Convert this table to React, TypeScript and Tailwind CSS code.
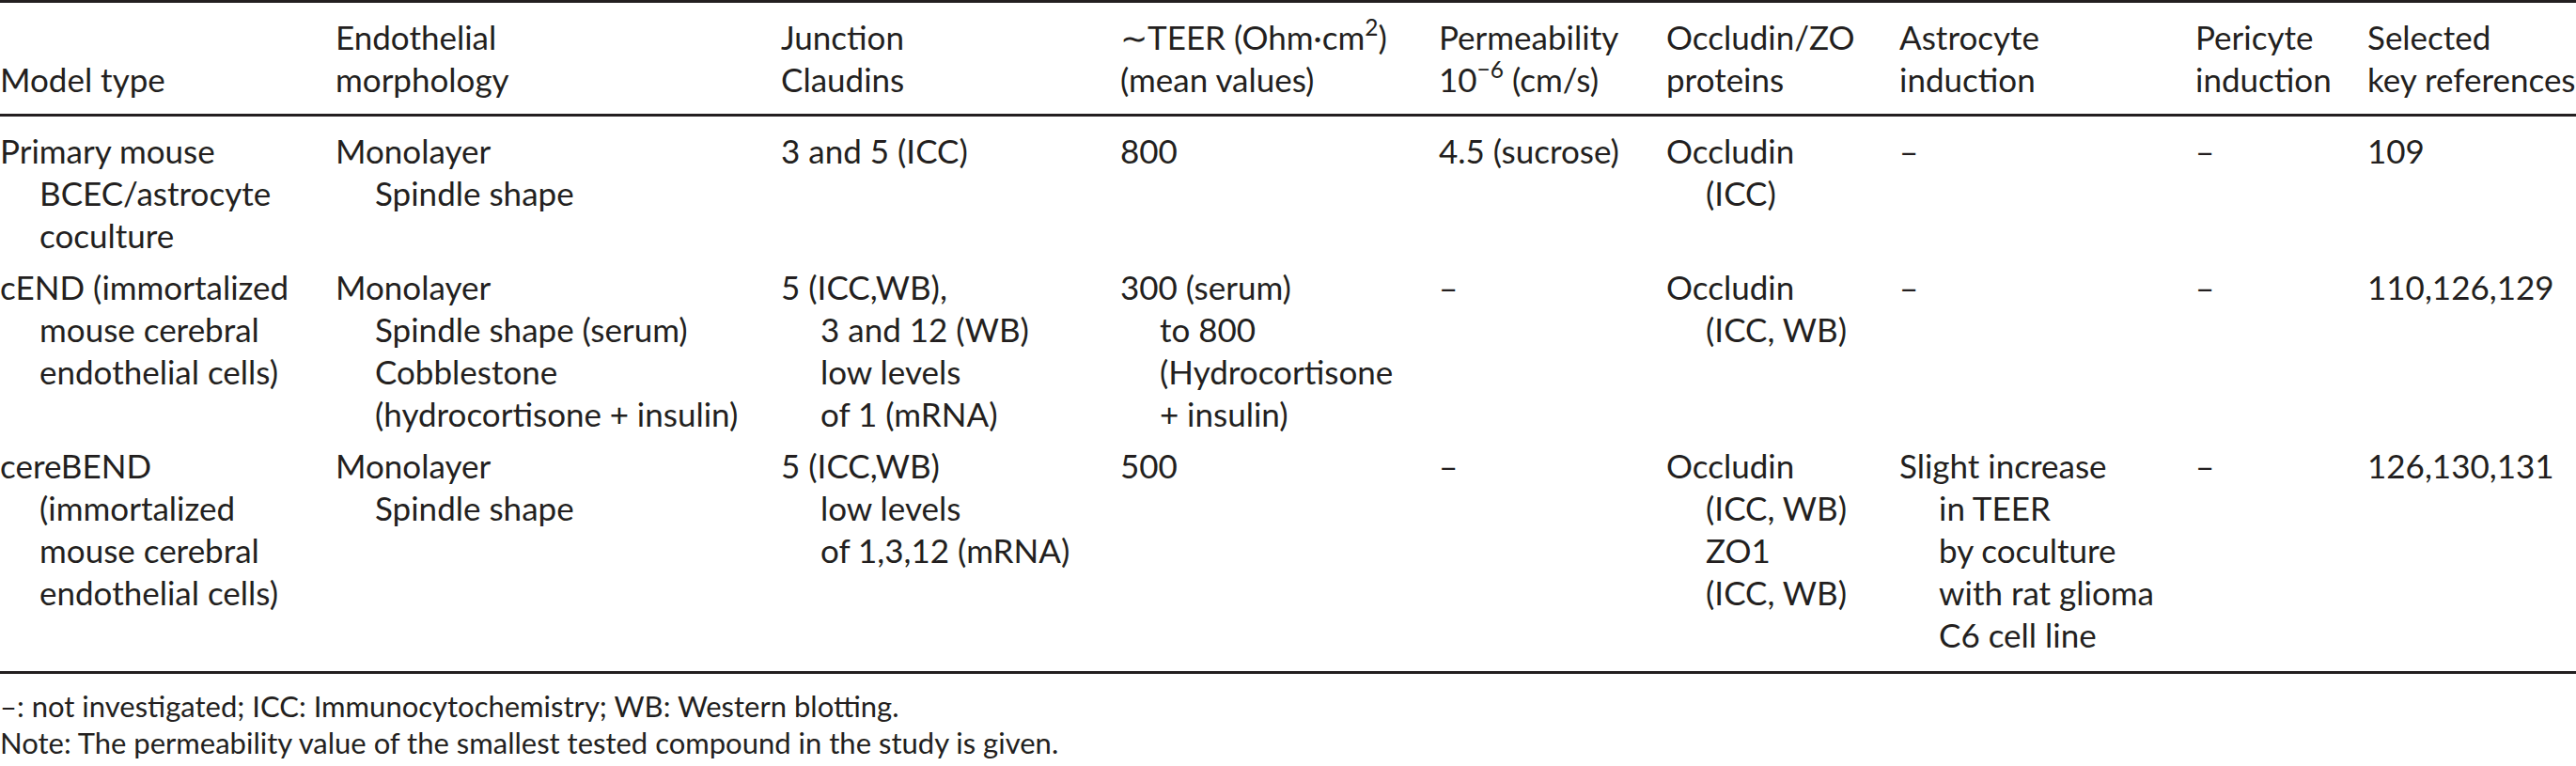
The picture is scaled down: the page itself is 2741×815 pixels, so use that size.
const cols = "grid grid-cols-[357px_474px_361px_339px_242px_248px_315px_183px_222px]";

type Line = string | JSX.Element;

const header: Line[][] = [
  ["Model type"],
  ["Endothelial", "morphology"],
  ["Junction", "Claudins"],
  [
    <>
      ∼TEER (Ohm·cm<sup className="text-[0.7em] -top-[0.6em]">2</sup>)
    </>,
    "(mean values)",
  ],
  [
    "Permeability",
    <>
      10<sup className="text-[0.7em] -top-[0.6em]">−6</sup> (cm/s)
    </>,
  ],
  ["Occludin/ZO", "proteins"],
  ["Astrocyte", "induction"],
  ["Pericyte", "induction"],
  ["Selected", "key references"],
];

const rows: Line[][][] = [
  [
    ["Primary mouse", "BCEC/astrocyte", "coculture"],
    ["Monolayer", "Spindle shape"],
    ["3 and 5 (ICC)"],
    ["800"],
    ["4.5 (sucrose)"],
    ["Occludin", "(ICC)"],
    ["–"],
    ["–"],
    ["109"],
  ],
  [
    ["cEND (immortalized", "mouse cerebral", "endothelial cells)"],
    ["Monolayer", "Spindle shape (serum)", "Cobblestone", "(hydrocortisone\u2005+\u2005insulin)"],
    ["5 (ICC,WB),", "3 and 12 (WB)", "low levels", "of 1 (mRNA)"],
    ["300 (serum)", "to 800", "(Hydrocortisone", "+\u2005insulin)"],
    ["–"],
    ["Occludin", "(ICC, WB)"],
    ["–"],
    ["–"],
    ["110,126,129"],
  ],
  [
    ["cereBEND", "(immortalized", "mouse cerebral", "endothelial cells)"],
    ["Monolayer", "Spindle shape"],
    ["5 (ICC,WB)", "low levels", "of 1,3,12 (mRNA)"],
    ["500"],
    ["–"],
    ["Occludin", "(ICC, WB)", "ZO1", "(ICC, WB)"],
    ["Slight increase", "in TEER", "by coculture", "with rat glioma", "C6 cell line"],
    ["–"],
    ["126,130,131"],
  ],
];

function Cell({ lines }: { lines: Line[] }) {
  return (
    <div className="flex flex-col">
      {lines.map((l, i) => (
        <div key={i} className={i === 0 ? "whitespace-nowrap" : "whitespace-nowrap pl-[42px]"}>
          {l}
        </div>
      ))}
    </div>
  );
}

export default function App() {
  return (
    <div className="w-[2741px] bg-white text-[#231f20] font-['Lato',sans-serif]">
      {/* Table */}
      <div className="border-t-[3px] border-b-[3px] border-[#231f20] text-[35px] leading-[45px]">
        <div className={`${cols} items-end pt-[14px] pb-[14px] border-b-[3px] border-[#231f20]`}>
          {header.map((h, i) => (
            <div key={i} className="flex flex-col">
              {h.map((l, j) => (
                <div key={j} className="whitespace-nowrap">
                  {l}
                </div>
              ))}
            </div>
          ))}
        </div>
        <div className="pt-[9px] pb-[11px]">
          {rows.map((r, i) => (
            <div key={i} className={`${cols} items-start py-[5px]`}>
              {r.map((c, j) => (
                <Cell key={j} lines={c} />
              ))}
            </div>
          ))}
        </div>
      </div>

      {/* Notes */}
      <div className="pt-[15px] text-[31px] leading-[39px]">
        <p className="whitespace-nowrap">–: not investigated; ICC: Immunocytochemistry; WB: Western blotting.</p>
        <p className="whitespace-nowrap">Note: The permeability value of the smallest tested compound in the study is given.</p>
      </div>
    </div>
  );
}
